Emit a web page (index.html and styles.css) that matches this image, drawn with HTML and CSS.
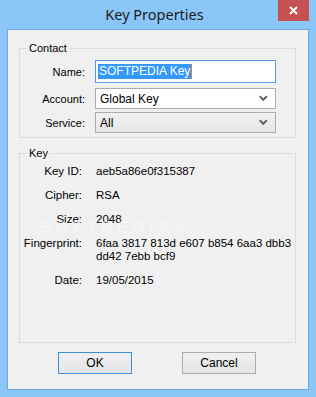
FILE: index.html
```html
<!DOCTYPE html>
<html lang="en">
<head>
  <meta charset="UTF-8" />
  <title>Key Properties</title>
  <link rel="stylesheet" href="styles.css">
</head>
<body>
  <div class="window">
    <div class="titlebar">
      <span></span>
      <div class="title">Key Properties</div>
      <div class="close">
        <svg width="11" height="9" viewBox="0 0 11 9">
          <path d="M2 1 L9 8 M9 1 L2 8" stroke="#fff" stroke-width="2"/>
        </svg>
      </div>
    </div>

    <div class="client">
      <fieldset class="group contact">
        <legend>Contact</legend>
        <div class="field name-row">
          <label>Name:</label>
          <div class="textbox"><span class="selected">SOFTPEDIA Key</span><span class="caret"></span></div>
        </div>
        <div class="field account-row">
          <label>Account:</label>
          <div class="combo">Global Key<span class="arrow"></span></div>
        </div>
        <div class="field service-row">
          <label>Service:</label>
          <div class="combo readonly">All<span class="arrow"></span></div>
        </div>
      </fieldset>

      <fieldset class="group key">
        <legend>Key</legend>
        <div class="info"><span class="lbl">Key ID:</span><span>aeb5a86e0f315387</span></div>
        <div class="info"><span class="lbl">Cipher:</span><span>RSA</span></div>
        <div class="info"><span class="lbl">Size:</span><span>2048</span></div>
        <div class="info"><span class="lbl">Fingerprint:</span><span>6faa 3817 813d e607 b854 6aa3 dbb3<br>dd42 7ebb bcf9</span></div>
        <div class="info"><span class="lbl">Date:</span><span>19/05/2015</span></div>
        <div class="watermark">SOFTPEDIA®</div>
      </fieldset>

      <div class="buttons">
        <button class="default">OK</button>
        <button>Cancel</button>
      </div>
    </div>
  </div>
</body>
</html>
```

FILE: styles.css
```css
* {
  box-sizing: border-box;
  margin: 0;
  padding: 0;
}

body {
  width: 316px;
  height: 397px;
  background: #8ac6f7;
  font-family: 'Liberation Sans', Arial, sans-serif;
  font-size: 11px;
  color: #000;
  overflow: hidden;
}

.titlebar {
  display: grid;
  grid-template-columns: 1fr auto 1fr;
  height: 29px;
  padding-right: 7px;
}

.title {
  font-family: 'Noto Sans', 'Open Sans', sans-serif;
  font-size: 14.5px;
  color: #1e1e1e;
  padding-top: 4px;
}

.close {
  justify-self: end;
  width: 31px;
  height: 21px;
  background: #c75050;
  display: flex;
  align-items: center;
  justify-content: center;
}

.client {
  margin: 0 7px;
  height: 361px;
  background: #f0f0f0;
  border: 1px solid #6ea8df;
  padding: 12px 12px 0 11px;
}

.group {
  border: 1px solid #dcdcdc;
  padding: 0;
  margin: 0;
}

.group legend {
  margin-left: 7px;
  padding: 0 2px;
  line-height: 13px;
}

.contact {
  height: 96px;
  padding-top: 5px;
}

.field {
  display: grid;
  grid-template-columns: 65px 181px;
  column-gap: 10px;
  align-items: center;
}

.field label {
  text-align: right;
}

.name-row {
  margin-bottom: 5px;
}

.account-row {
  margin-bottom: 3px;
}

.textbox {
  height: 23px;
  background: #fff;
  border: 1px solid #569de5;
  padding: 3px 2px;
  display: flex;
  align-items: center;
}

.selected {
  background: #3399ff;
  color: #fff;
  line-height: 15px;
  padding: 0 1px;
  font-size: 12px;
}

.caret {
  width: 1px;
  height: 15px;
  background: #e8801e;
}

.combo {
  height: 21px;
  background: #fff;
  border: 1px solid #acacac;
  padding: 0 4px;
  display: flex;
  align-items: center;
  font-size: 12px;
}

.combo.readonly {
  background: linear-gradient(#f2f2f2, #e5e5e5);
}

.arrow {
  margin-left: auto;
  width: 6px;
  height: 6px;
  border-right: 2px solid #606060;
  border-bottom: 2px solid #606060;
  transform: rotate(45deg) translate(-2px, -1px);
  margin-right: 4px;
}

.key {
  position: relative;
  margin-top: 9px;
  height: 196px;
  padding-top: 5px;
}

.info {
  display: grid;
  grid-template-columns: 62px 1fr;
  column-gap: 14px;
  line-height: 13px;
  margin-bottom: 11px;
  font-size: 11.5px;
}

.info .lbl {
  text-align: right;
}

.watermark {
  position: absolute;
  left: 20px;
  top: 63px;
  font-size: 17px;
  line-height: 10px;
  font-weight: bold;
  color: rgba(255, 255, 255, 0.4);
  letter-spacing: 4px;
  pointer-events: none;
}

.buttons {
  display: flex;
  justify-content: center;
  gap: 50px;
  margin-top: 9px;
  padding-right: 1px;
}

.buttons button {
  width: 74px;
  height: 22px;
  font-family: 'Liberation Sans', Arial, sans-serif;
  font-size: 12px;
  color: #000;
  background: linear-gradient(#f0f0f0, #e5e5e5);
  border: 1px solid #adadad;
}

.buttons button.default {
  border-color: #3c8fe2;
}
```
